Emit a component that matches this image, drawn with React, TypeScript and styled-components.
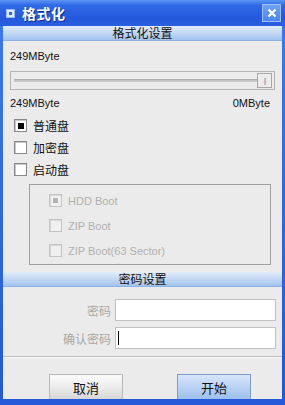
import React from "react";
import styled, { createGlobalStyle } from "styled-components";

const Global = createGlobalStyle`
  html, body { margin: 0; padding: 0; background: #ffffff; }
  body { font-family: "Liberation Sans", "Noto Sans CJK SC", sans-serif; }
  * { box-sizing: border-box; }
`;

const Window = styled.div`
  width: 285px;
  height: 405px;
  display: flex;
  flex-direction: column;
  background: linear-gradient(180deg, #3a7af0 0%, #2458d8 100%);
  padding: 0 3px 6px 3px;
`;

const TitleBar = styled.div`
  height: 26px;
  margin: 0 -3px;
  padding: 0 4px 0 6px;
  display: flex;
  align-items: center;
  gap: 7px;
  background: linear-gradient(180deg, #5b95f4 0%, #2f6ae6 20%, #2458dc 70%, #2a5fe0 100%);
`;

const AppIcon = styled.div`
  width: 9px;
  height: 9px;
  background: #dce8fb;
  border: 1px solid #9bbcf2;
  display: flex;
  align-items: center;
  justify-content: center;
  &::after {
    content: "";
    width: 3px;
    height: 3px;
    background: #2f66e0;
  }
`;

const Title = styled.span`
  flex: 1;
  color: #ffffff;
  font-family: "Noto Sans CJK SC", sans-serif;
  font-weight: 700;
  font-size: 14px;
  letter-spacing: 0.5px;
  text-shadow: 1px 1px 0 #0b2f8c;
`;

const CloseButton = styled.div`
  width: 19px;
  height: 18px;
  border: 1px solid #9cc0f6;
  background: linear-gradient(180deg, #6fa2f5 0%, #4c86ee 100%);
  display: flex;
  align-items: center;
  justify-content: center;
`;

const Client = styled.div`
  flex: 1;
  background: #ebebeb;
  display: flex;
  flex-direction: column;
`;

const SectionHeader = styled.div`
  height: 15px;
  background: linear-gradient(180deg, #e2ecf9 0%, #c3d8f4 50%, #a2c3ee 100%);
  border-bottom: 1px solid #8fb2e4;
  text-align: center;
  font-family: "Noto Sans CJK SC", sans-serif;
  font-size: 12px;
  line-height: 14px;
  color: #111;
`;

const Body = styled.div`
  display: flex;
  flex-direction: column;
  padding: 0 7px 0 7px;
`;

const SizeText = styled.div`
  font-size: 11px;
  color: #111;
  line-height: 13px;
`;

const SliderBox = styled.div`
  margin-top: 8px;
  height: 19px;
  border: 1px solid #b5b5b5;
  display: flex;
  align-items: center;
  padding: 0 2px 0 3px;
  gap: 0;
`;

const Track = styled.div`
  flex: 1;
  height: 3px;
  background: #c6c6c6;
  border-top: 1px solid #b0b0b0;
`;

const Thumb = styled.div`
  width: 15px;
  height: 15px;
  border: 1px solid #a8a8a8;
  background: #ececec;
  display: flex;
  align-items: center;
  justify-content: center;
  font-size: 7px;
  color: #999;
  letter-spacing: -1px;
`;

const RangeRow = styled.div`
  margin-top: 7px;
  display: flex;
  justify-content: space-between;
  padding-right: 5px;
  font-size: 11px;
  line-height: 13px;
  color: #111;
`;

const Options = styled.div`
  margin-top: 8px;
  display: flex;
  flex-direction: column;
  gap: 7px;
  padding-left: 4px;
`;

const OptionRow = styled.label<{ $disabled?: boolean }>`
  display: flex;
  align-items: center;
  gap: 6px;
  height: 15px;
  font-family: ${(p) => (p.$disabled ? `"Liberation Sans", sans-serif` : `"Noto Sans CJK SC", sans-serif`)};
  font-size: ${(p) => (p.$disabled ? "11px" : "12px")};
  color: ${(p) => (p.$disabled ? "#b0b0b0" : "#111")};
`;

const Box = styled.span<{ $checked?: boolean; $disabled?: boolean }>`
  width: 13px;
  height: 13px;
  border: 1px solid ${(p) => (p.$disabled ? "#c4c4c4" : "#888")};
  box-shadow: inset 1px 1px 0 ${(p) => (p.$disabled ? "#d8d8d8" : "#c8c8c8")};
  background: ${(p) => (p.$disabled ? "#f0f0f0" : "#ffffff")};
  display: flex;
  align-items: center;
  justify-content: center;
  &::after {
    content: "";
    display: ${(p) => (p.$checked ? "block" : "none")};
    width: ${(p) => (p.$disabled ? "5px" : "6px")};
    height: ${(p) => (p.$disabled ? "5px" : "6px")};
    background: ${(p) => (p.$disabled ? "#b4b4b4" : "#000")};
  }
`;

const GroupBox = styled.div`
  margin: 7px 4px 7px 19px;
  height: 81px;
  border: 1px solid #a0a0a0;
  display: flex;
  flex-direction: column;
  gap: 10px;
  padding: 8px 0 0 19px;
`;

const Form = styled.div`
  padding: 12px 6px 0 0;
  display: flex;
  flex-direction: column;
  gap: 6px;
`;

const FieldRow = styled.div`
  display: flex;
  align-items: center;
  gap: 4px;
`;

const FieldLabel = styled.span`
  width: 108px;
  text-align: right;
  font-family: "Noto Sans CJK SC", sans-serif;
  font-size: 12px;
  color: #a8a8a8;
`;

const Input = styled.div<{ $focused?: boolean }>`
  flex: 1;
  height: 22px;
  background: #ffffff;
  border: 1px solid #c2c2c2;
  position: relative;
  &::before {
    content: "";
    display: ${(p) => (p.$focused ? "block" : "none")};
    position: absolute;
    left: 2px;
    top: 3px;
    width: 1px;
    height: 14px;
    background: #000;
  }
`;

const Separator = styled.div`
  margin-top: 7px;
  height: 2px;
  border-top: 1px solid #bdbdbd;
  border-bottom: 1px solid #fafafa;
`;

const ButtonBar = styled.div`
  flex: 1;
  display: flex;
  align-items: flex-end;
  padding: 0 0 0 46px;
  gap: 54px;
`;

const Button = styled.div<{ $primary?: boolean }>`
  width: 74px;
  height: 25px;
  display: flex;
  align-items: center;
  justify-content: center;
  font-family: "Noto Sans CJK SC", sans-serif;
  font-size: 13px;
  color: #111;
  border: 1px solid ${(p) => (p.$primary ? "#7f9cc8" : "#b8b8b8")};
  border-bottom: none;
  background: ${(p) =>
    p.$primary
      ? "linear-gradient(180deg, #d7e6fa 0%, #b9d2f4 50%, #9ebfee 100%)"
      : "linear-gradient(180deg, #fbfbfb 0%, #ececec 50%, #d6d6d6 100%)"};
`;

export default function App() {
  return (
    <>
      <Global />
      <Window>
        <TitleBar>
          <AppIcon />
          <Title>格式化</Title>
          <CloseButton>
            <svg width="10" height="10" viewBox="0 0 10 10">
              <path d="M1.5 1.5 L8.5 8.5 M8.5 1.5 L1.5 8.5" stroke="#ffffff" strokeWidth="2.2" />
            </svg>
          </CloseButton>
        </TitleBar>
        <Client>
          <SectionHeader>格式化设置</SectionHeader>
          <Body>
            <SizeText style={{ marginTop: 9 }}>249MByte</SizeText>
            <SliderBox>
              <Track />
              <Thumb>||</Thumb>
            </SliderBox>
            <RangeRow>
              <span>249MByte</span>
              <span>0MByte</span>
            </RangeRow>
            <Options>
              <OptionRow>
                <Box $checked />
                普通盘
              </OptionRow>
              <OptionRow>
                <Box />
                加密盘
              </OptionRow>
              <OptionRow>
                <Box />
                启动盘
              </OptionRow>
            </Options>
            <GroupBox>
              <OptionRow $disabled>
                <Box $checked $disabled />
                HDD Boot
              </OptionRow>
              <OptionRow $disabled>
                <Box $disabled />
                ZIP Boot
              </OptionRow>
              <OptionRow $disabled>
                <Box $disabled />
                ZIP Boot(63 Sector)
              </OptionRow>
            </GroupBox>
          </Body>
          <SectionHeader>密码设置</SectionHeader>
          <Form>
            <FieldRow>
              <FieldLabel>密码</FieldLabel>
              <Input />
            </FieldRow>
            <FieldRow>
              <FieldLabel>确认密码</FieldLabel>
              <Input $focused />
            </FieldRow>
          </Form>
          <Separator />
          <ButtonBar>
            <Button>取消</Button>
            <Button $primary>开始</Button>
          </ButtonBar>
        </Client>
      </Window>
    </>
  );
}
